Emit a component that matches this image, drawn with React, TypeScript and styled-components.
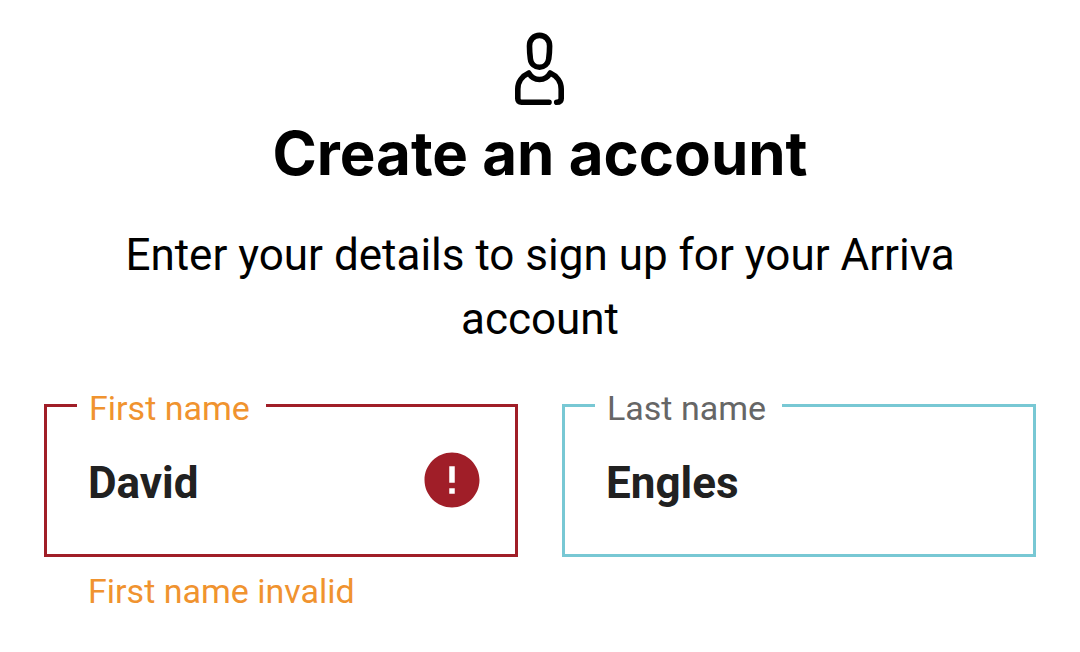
import React from "react";
import styled, { createGlobalStyle } from "styled-components";

const GlobalStyle = createGlobalStyle`
  *, *::before, *::after { box-sizing: border-box; }
  body {
    margin: 0;
    background: #ffffff;
    color: #000000;
    font-family: Roboto, "Liberation Sans", sans-serif;
  }
`;

const Page = styled.main`
  padding: 29px 44px 40px;
`;

const Header = styled.header`
  display: flex;
  flex-direction: column;
  align-items: center;
  text-align: center;
  margin-bottom: 31px;
`;

const PersonIcon = styled.svg`
  display: block;
  width: 56px;
  height: 80px;
  fill: none;
  stroke: #000000;
  stroke-width: 5.6;
  stroke-linecap: round;
  stroke-linejoin: round;
`;

const Title = styled.h1`
  margin: 8px 0 34px;
  font-family: Inter, "Open Sans", sans-serif;
  font-size: 60px;
  font-weight: 700;
  line-height: 72px;
`;

const Intro = styled.p`
  margin: 0;
  font-size: 44px;
  line-height: 64px;
`;

const Form = styled.form`
  display: grid;
  grid-template-columns: repeat(2, minmax(0, 1fr));
  gap: 44px;
  align-items: start;
`;

const Outline = styled.fieldset<{ $invalid?: boolean }>`
  min-width: 0;
  margin: 0;
  padding: 19px 30px 41px;
  border: 3px solid ${(p) => (p.$invalid ? "#a01e28" : "#78c8d4")};
`;

const Legend = styled.legend`
  padding: 7px 16px 1px 12px;
`;

const Label = styled.label<{ $invalid?: boolean }>`
  display: block;
  font-size: 34px;
  line-height: 38px;
  color: ${(p) => (p.$invalid ? "#f0932f" : "#666666")};
`;

const Control = styled.div`
  display: flex;
  align-items: center;
  padding-left: 11px;
`;

const Input = styled.input`
  flex: 1;
  min-width: 0;
  height: 66px;
  padding: 6px 0 0;
  border: 0;
  outline: 0;
  background: transparent;
  color: #212121;
  font: inherit;
  font-size: 44px;
  font-weight: 700;
`;

const ErrorIcon = styled.svg`
  flex: none;
  width: 66px;
  height: 66px;
  fill: #a01e28;
`;

const Message = styled.p`
  margin: 15px 44px 0;
  font-size: 34px;
  line-height: 38px;
  color: #f0932f;
`;

interface FieldProps {
  id: string;
  label: string;
  value: string;
  error?: string;
}

function Field({ id, label, value, error }: FieldProps) {
  const invalid = Boolean(error);
  return (
    <div>
      <Outline $invalid={invalid}>
        <Legend>
          <Label htmlFor={id} $invalid={invalid}>{label}</Label>
        </Legend>
        <Control>
          <Input
            id={id}
            name={id}
            type="text"
            defaultValue={value}
            aria-invalid={invalid}
            aria-describedby={invalid ? `${id}-error` : undefined}
          />
          {invalid && (
            <ErrorIcon viewBox="0 0 24 24" aria-hidden="true">
              <path d="M12 2C6.48 2 2 6.48 2 12s4.48 10 10 10 10-4.48 10-10S17.52 2 12 2zm1 15h-2v-2h2v2zm0-4h-2V7h2v6z" />
            </ErrorIcon>
          )}
        </Control>
      </Outline>
      {invalid && <Message id={`${id}-error`}>{error}</Message>}
    </div>
  );
}

export default function App() {
  return (
    <>
      <GlobalStyle />
      <Page>
        <Header>
          <PersonIcon viewBox="0 0 56 80" aria-hidden="true">
            <path d="M17.5 17C17.5 10.5 22 6.4 27.5 6.4S37.6 10.5 37.6 17C37.6 20 37.1 27 36.7 30C36 35 32 38.2 27.5 38.2S19 35 18.4 30C18 27 17.5 20 17.5 17Z" />
            <path d="M37 73.3H9.5Q5.8 73.3 5.8 69.5V60C5.8 53 10 47 16.8 44C19 48 23 50.5 27.5 50.5S36 48 38.2 44C45 47 49.2 53 49.2 60V69.5Q49.2 73.3 44.7 73.3" />
          </PersonIcon>
          <Title>Create an account</Title>
          <Intro>Enter your details to sign up for your Arriva account</Intro>
        </Header>
        <Form>
          <Field id="first-name" label="First name" value="David" error="First name invalid" />
          <Field id="last-name" label="Last name" value="Engles" />
        </Form>
      </Page>
    </>
  );
}
